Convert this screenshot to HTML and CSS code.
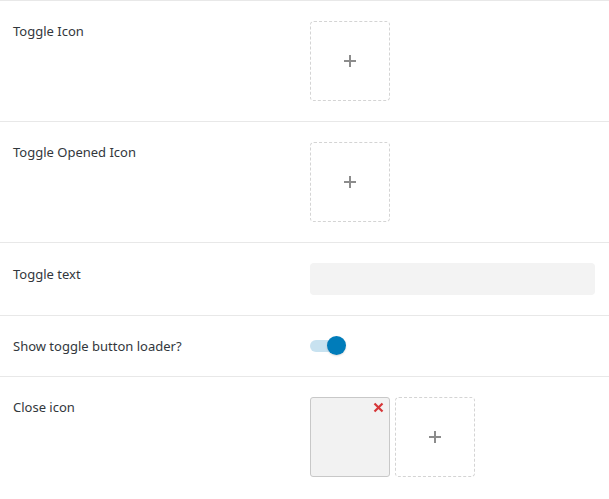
FILE: index.html
```html
<!DOCTYPE html>
<html>
<head>
<meta charset="utf-8">
<link rel="stylesheet" href="styles.css">
</head>
<body>
<div class="form">
  <div class="row">
    <div class="label">Toggle Icon</div>
    <div class="value">
      <div class="upload"><span class="plus"></span></div>
    </div>
  </div>
  <div class="row">
    <div class="label">Toggle Opened Icon</div>
    <div class="value">
      <div class="upload"><span class="plus"></span></div>
    </div>
  </div>
  <div class="row">
    <div class="label label-input">Toggle text</div>
    <div class="value">
      <div class="text-input"></div>
    </div>
  </div>
  <div class="row">
    <div class="label">Show toggle button loader?</div>
    <div class="value">
      <div class="toggle"><span class="track"></span><span class="knob"></span></div>
    </div>
  </div>
  <div class="row">
    <div class="label">Close icon</div>
    <div class="value images">
      <div class="thumb">
        <svg class="remove" width="11" height="11" viewBox="0 0 11 11"><path d="M1.5 1.5 L9.5 9.5 M9.5 1.5 L1.5 9.5" stroke="#d63638" stroke-width="2.2" fill="none"/></svg>
      </div>
      <div class="upload"><span class="plus"></span></div>
    </div>
  </div>
</div>
</body>
</html>
```
FILE: styles.css
```css
html, body {
  margin: 0;
  padding: 0;
  background: #fff;
}
body {
  font-family: "Segoe UI", "Noto Sans", "Open Sans", sans-serif;
  font-size: 13px;
  color: #32373c;
}
.form {
  border-top: 1px solid #e8e8e8;
}
.row {
  display: flex;
  padding: 20px 0;
  border-bottom: 1px solid #e8e8e8;
}
.row:last-child {
  border-bottom: none;
}
.label {
  width: 297px;
  padding-left: 13px;
  line-height: 20px;
}
.label-input {
  padding-top: 1px;
}
.value {
  flex: 1;
  padding-right: 14px;
}
.images {
  display: flex;
  gap: 5px;
}
.upload {
  width: 80px;
  height: 80px;
  box-sizing: border-box;
  border: 1px dashed #d4d4d4;
  border-radius: 4px;
  display: flex;
  align-items: center;
  justify-content: center;
}
.plus {
  position: relative;
  width: 12px;
  height: 12px;
}
.plus::before, .plus::after {
  content: "";
  position: absolute;
  background: #8c8c8c;
}
.plus::before {
  left: 0;
  top: 5px;
  width: 12px;
  height: 2px;
}
.plus::after {
  left: 5px;
  top: 0;
  width: 2px;
  height: 12px;
}
.thumb {
  width: 80px;
  height: 80px;
  box-sizing: border-box;
  border: 1px solid #c8c8c8;
  border-radius: 3px;
  background: #f2f2f2;
  position: relative;
}
.remove {
  position: absolute;
  top: 4px;
  right: 5px;
}
.text-input {
  height: 32px;
  background: #f3f3f3;
  border-radius: 4px;
}
.toggle {
  position: relative;
  width: 36px;
  height: 20px;
}
.track {
  position: absolute;
  left: 0;
  top: 4px;
  width: 34px;
  height: 12px;
  border-radius: 6px;
  background: #c8e2f0;
}
.knob {
  position: absolute;
  left: 17px;
  top: 0;
  width: 19px;
  height: 19px;
  border-radius: 50%;
  background: #007cba;
  box-shadow: 0 1px 2px rgba(0,0,0,0.15);
}
```
